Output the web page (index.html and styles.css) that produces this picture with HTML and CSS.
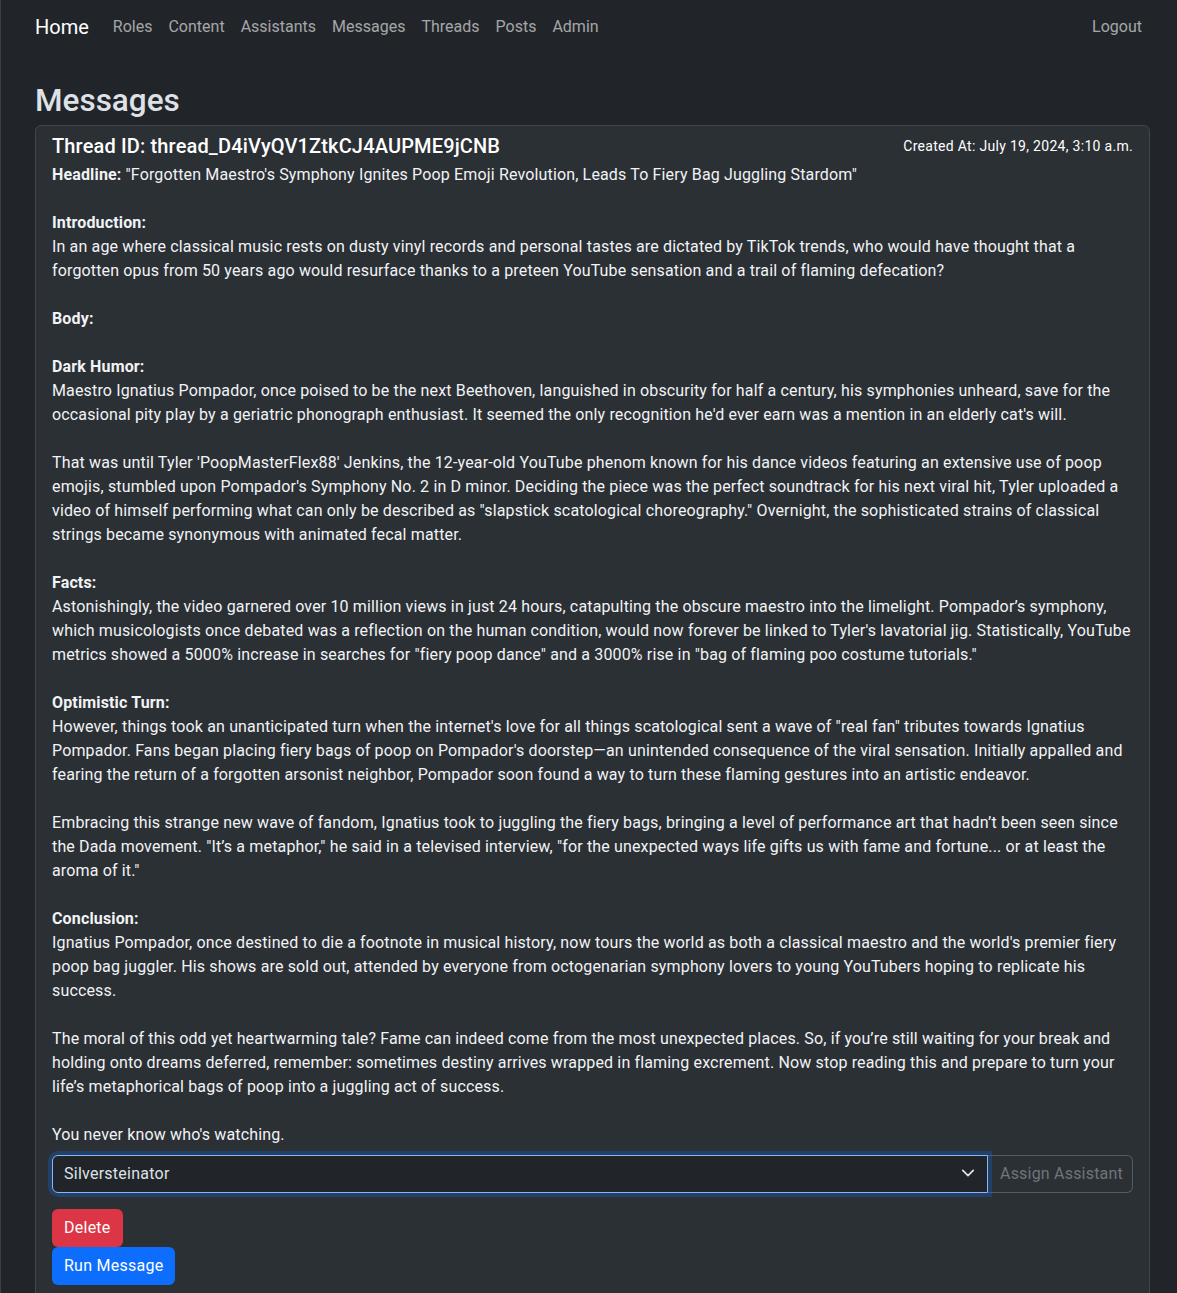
FILE: index.html
```html
<!DOCTYPE html>
<html lang="en">
<head>
<meta charset="utf-8">
<title>Messages</title>
<link rel="stylesheet" href="styles.css">
</head>
<body>
<nav class="navbar">
  <div class="nav-left">
    <a class="brand" href="#">Home</a>
    <a class="nav-link" href="#">Roles</a>
    <a class="nav-link" href="#">Content</a>
    <a class="nav-link" href="#">Assistants</a>
    <a class="nav-link" href="#">Messages</a>
    <a class="nav-link" href="#">Threads</a>
    <a class="nav-link" href="#">Posts</a>
    <a class="nav-link" href="#">Admin</a>
  </div>
  <a class="nav-link" href="#">Logout</a>
</nav>
<main class="container">
  <h2 class="page-title">Messages</h2>
  <div class="card">
    <div class="card-head">
      <h5 class="card-title">Thread ID: thread_D4iVyQV1ZtkCJ4AUPME9jCNB</h5>
      <small class="created">Created At: July 19, 2024, 3:10 a.m.</small>
    </div>
    <p class="message"><b>Headline:</b> "Forgotten Maestro's Symphony Ignites Poop Emoji Revolution, Leads To Fiery Bag Juggling Stardom"<br><br><b>Introduction:</b><br>In an age where classical music rests on dusty vinyl records and personal tastes are dictated by TikTok trends, who would have thought that a<br>forgotten opus from 50 years ago would resurface thanks to a preteen YouTube sensation and a trail of flaming defecation?<br><br><b>Body:</b><br><br><b>Dark Humor:</b><br>Maestro Ignatius Pompador, once poised to be the next Beethoven, languished in obscurity for half a century, his symphonies unheard, save for the<br>occasional pity play by a geriatric phonograph enthusiast. It seemed the only recognition he'd ever earn was a mention in an elderly cat's will.<br><br>That was until Tyler 'PoopMasterFlex88' Jenkins, the 12-year-old YouTube phenom known for his dance videos featuring an extensive use of poop<br>emojis, stumbled upon Pompador's Symphony No. 2 in D minor. Deciding the piece was the perfect soundtrack for his next viral hit, Tyler uploaded a<br>video of himself performing what can only be described as "slapstick scatological choreography." Overnight, the sophisticated strains of classical<br>strings became synonymous with animated fecal matter.<br><br><b>Facts:</b><br>Astonishingly, the video garnered over 10 million views in just 24 hours, catapulting the obscure maestro into the limelight. Pompador’s symphony,<br>which musicologists once debated was a reflection on the human condition, would now forever be linked to Tyler's lavatorial jig. Statistically, YouTube<br>metrics showed a 5000% increase in searches for "fiery poop dance" and a 3000% rise in "bag of flaming poo costume tutorials."<br><br><b>Optimistic Turn:</b><br>However, things took an unanticipated turn when the internet's love for all things scatological sent a wave of "real fan" tributes towards Ignatius<br>Pompador. Fans began placing fiery bags of poop on Pompador's doorstep—an unintended consequence of the viral sensation. Initially appalled and<br>fearing the return of a forgotten arsonist neighbor, Pompador soon found a way to turn these flaming gestures into an artistic endeavor.<br><br>Embracing this strange new wave of fandom, Ignatius took to juggling the fiery bags, bringing a level of performance art that hadn’t been seen since<br>the Dada movement. "It’s a metaphor," he said in a televised interview, "for the unexpected ways life gifts us with fame and fortune... or at least the<br>aroma of it."<br><br><b>Conclusion:</b><br>Ignatius Pompador, once destined to die a footnote in musical history, now tours the world as both a classical maestro and the world's premier fiery<br>poop bag juggler. His shows are sold out, attended by everyone from octogenarian symphony lovers to young YouTubers hoping to replicate his<br>success.<br><br>The moral of this odd yet heartwarming tale? Fame can indeed come from the most unexpected places. So, if you’re still waiting for your break and<br>holding onto dreams deferred, remember: sometimes destiny arrives wrapped in flaming excrement. Now stop reading this and prepare to turn your<br>life’s metaphorical bags of poop into a juggling act of success.<br><br>You never know who's watching.</p>
    <form class="assign">
      <div class="select-wrap">
        <select class="select">
          <option>Silversteinator</option>
        </select>
        <svg class="chevron" width="16" height="16" viewBox="0 0 16 16" aria-hidden="true"><path d="M2 5l6 6 6-6" fill="none" stroke="#dee2e6" stroke-width="2" stroke-linecap="round" stroke-linejoin="round"/></svg>
      </div>
      <button type="button" class="btn-outline">Assign Assistant</button>
    </form>
    <div class="actions">
      <button type="button" class="btn btn-danger">Delete</button>
      <button type="button" class="btn btn-primary">Run Message</button>
    </div>
  </div>
</main>
</body>
</html>
```
FILE: styles.css
```css
* { box-sizing: border-box; }
body {
  margin: 0;
  background: #212529;
  color: #dee2e6;
  font-family: Roboto, "Noto Sans", "Liberation Sans", sans-serif;
  font-size: 16px;
  line-height: 1.5;
  border-left: 1px solid #3d4146;
}
a { text-decoration: none; }
.navbar {
  display: flex;
  justify-content: space-between;
  align-items: center;
  padding: 7px 27px 9px 34px;
  height: 56px;
}
.nav-left { display: flex; align-items: center; }
.brand {
  color: #fff;
  font-size: 20px;
  line-height: 30px;
  padding: 5px 0;
  margin-right: 16px;
}
.nav-link {
  color: rgba(255,255,255,0.6);
  padding: 8px;
  line-height: 24px;
}
.container {
  padding: 0 27px 0 34px;
}
.page-title {
  margin: 26px 0 5px;
  font-size: 31.5px;
  font-weight: 500;
  line-height: 1.2;
  color: #dee2e6;
}
.card {
  background: #2b3035;
  border: 1px solid #41464c;
  border-radius: 6px;
  padding: 8px 16px 16px;
  letter-spacing: 0.15px;
}
.card-head {
  display: flex;
  justify-content: space-between;
  align-items: flex-start;
  margin-bottom: 5px;
}
.card-title {
  margin: 0;
  font-size: 20px;
  font-weight: 500;
  line-height: 24px;
  color: #fff;
  letter-spacing: 0.15px;
}
.created {
  font-size: 14px;
  line-height: 21px;
  color: #fff;
  padding-top: 2px;
  letter-spacing: 0.3px;
}
.message {
  margin: 0 0 8px;
  color: #f1f3f5;
  white-space: nowrap;
}
.message b { font-weight: 700; }
.assign {
  display: flex;
  margin: 0;
}
.select-wrap {
  position: relative;
  flex: 1;
}
.select {
  display: block;
  width: 100%;
  height: 38px;
  appearance: none;
  -webkit-appearance: none;
  background: #212529;
  color: #dee2e6;
  font: inherit;
  letter-spacing: 0.25px;
  padding: 6px 36px 6px 11px;
  border: 1px solid #86b7fe;
  border-radius: 6px 0 0 6px;
  box-shadow: 0 0 0 4px rgba(13,110,253,0.25);
  outline: none;
}
.chevron {
  position: absolute;
  right: 13px;
  top: 11px;
  width: 14px;
  height: 14px;
  pointer-events: none;
}
.btn-outline {
  flex: none;
  width: 145px;
  height: 38px;
  white-space: nowrap;
  background: transparent;
  color: #6f757b;
  border: 1px solid #565b61;
  border-left: none;
  border-radius: 0 6px 6px 0;
  font: inherit;
  letter-spacing: 0.2px;
  padding: 6px 12px;
}
.actions {
  display: flex;
  flex-direction: column;
  align-items: flex-start;
  margin-top: 16px;
}
.btn {
  font: inherit;
  letter-spacing: 0.25px;
  line-height: 24px;
  height: 38px;
  padding: 7px 12px;
  border: none;
  border-radius: 6px;
  color: #fff;
}
.btn-danger { background: #dc3545; }
.btn-primary { background: #0d6efd; }
```
